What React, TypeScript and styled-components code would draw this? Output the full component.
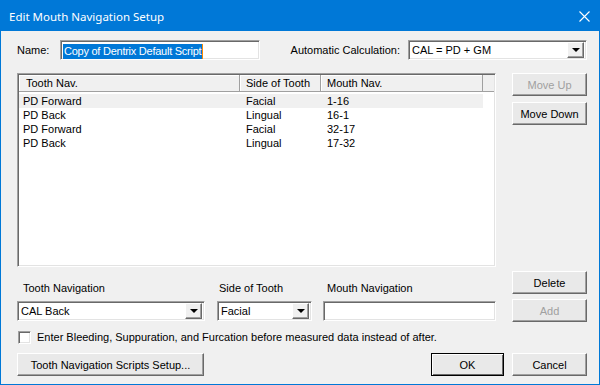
import styled, { createGlobalStyle } from 'styled-components';

const GlobalStyle = createGlobalStyle`
  html, body {
    margin: 0;
    padding: 0;
    background: #f0f0f0;
  }
  * {
    box-sizing: border-box;
  }
`;

const Window = styled.div`
  width: 600px;
  height: 385px;
  border: 1px solid #0078d7;
  background: #f0f0f0;
  display: flex;
  flex-direction: column;
  font-family: 'Liberation Sans', Arial, sans-serif;
  font-size: 11px;
  color: #000;
`;

const TitleBar = styled.div`
  height: 30px;
  background: #0078d7;
  color: #fff;
  display: flex;
  align-items: center;
  justify-content: space-between;
  padding: 0 9px 0 8px;
  font-family: 'Noto Sans', 'Open Sans', sans-serif;
  font-size: 11.5px;
`;

const Body = styled.div`
  flex: 1;
  padding: 9px 12px 0 16px;
  display: flex;
  flex-direction: column;
`;

const Row = styled.div<{ $top?: number }>`
  display: flex;
  margin-top: ${(p) => p.$top ?? 0}px;
`;

const NameLabel = styled.span`
  width: 43px;
  line-height: 20px;
`;

const Spacer = styled.div`
  flex: 1;
`;

const InlineLabel = styled.span`
  line-height: 20px;
  margin-right: 8px;
`;

const sunken = `
  border: 1px solid;
  border-color: #a0a0a0 #fff #fff #a0a0a0;
  box-shadow: inset 1px 1px #696969, inset -1px -1px #e3e3e3;
  background: #fff;
`;

const TextBox = styled.div<{ $width: number }>`
  ${sunken}
  width: ${(p) => p.$width}px;
  height: 20px;
  padding: 2px 2px 0 2px;
  display: flex;
  align-items: center;
  white-space: nowrap;
  overflow: hidden;
`;

const Selected = styled.span`
  background: #0078d7;
  color: #fff;
  line-height: 15px;
  padding: 0 1px;
  letter-spacing: -0.25px;
  border-right: 1px solid #ff8a00;
`;

const ComboBox = styled.div<{ $width: number }>`
  ${sunken}
  width: ${(p) => p.$width}px;
  height: 20px;
  display: flex;
  align-items: center;
  padding: 2px 2px 2px 3px;
`;

const ComboText = styled.span`
  flex: 1;
  white-space: nowrap;
`;

const ArrowButton = styled.div`
  width: 17px;
  height: 16px;
  background: #f0f0f0;
  border: 1px solid;
  border-color: #fff #696969 #696969 #fff;
  box-shadow: inset -1px -1px #a0a0a0;
  display: flex;
  align-items: center;
  justify-content: center;
`;

const Triangle = styled.div`
  width: 0;
  height: 0;
  border-left: 4px solid transparent;
  border-right: 4px solid transparent;
  border-top: 4px solid #000;
`;

const ListBox = styled.div`
  ${sunken}
  width: 479px;
  height: 194px;
  padding: 1px;
`;

const HeaderRow = styled.div`
  display: grid;
  grid-template-columns: 221px 81px 162px 1fr;
  height: 17px;
`;

const HeaderCell = styled.div<{ $pad?: number }>`
  background: #f0f0f0;
  border-right: 1px solid #a0a0a0;
  border-bottom: 1px solid #a0a0a0;
  box-shadow: inset 1px 1px #fff;
  padding-left: ${(p) => p.$pad ?? 6}px;
  line-height: 16px;
  white-space: nowrap;
  overflow: hidden;
`;

const HeaderFiller = styled.div`
  background: #f0f0f0;
  border-bottom: 1px solid #a0a0a0;
`;

const Rows = styled.div`
  padding-top: 2px;
`;

const DataRow = styled.div<{ $active?: boolean }>`
  display: grid;
  grid-template-columns: 221px 81px 162px;
  width: 464px;
  height: 14px;
  line-height: 14px;
  background: ${(p) => (p.$active ? '#f0f0f0' : 'transparent')};
`;

const Cell = styled.div<{ $pad?: number }>`
  padding-left: ${(p) => p.$pad ?? 6}px;
  white-space: nowrap;
`;

const SideColumn = styled.div<{ $gap: number }>`
  display: flex;
  flex-direction: column;
  gap: ${(p) => p.$gap}px;
  margin-left: 16px;
`;

const Button = styled.button<{ $width?: number; $default?: boolean }>`
  width: ${(p) => p.$width ?? 75}px;
  height: 23px;
  padding: 0;
  font: inherit;
  color: ${(p) => (p.disabled ? '#a0a0a0' : '#000')};
  background: #e9e9e9;
  border: 1px solid;
  border-color: ${(p) => (p.$default ? '#000' : '#fff #696969 #696969 #fff')};
  box-shadow: ${(p) =>
    p.$default
      ? 'inset 1px 1px #fff, inset -1px -1px #696969'
      : 'inset -1px -1px #a0a0a0'};
`;

const Fields = styled.div`
  width: 479px;
  display: flex;
  padding-top: 10px;
`;

const Field = styled.div<{ $gap?: number }>`
  display: flex;
  flex-direction: column;
  margin-left: ${(p) => p.$gap ?? 0}px;
`;

const FieldLabel = styled.div<{ $indent: number }>`
  line-height: 14px;
  height: 14px;
  margin-bottom: 6px;
  padding-left: ${(p) => p.$indent}px;
`;

const CheckRow = styled.label`
  display: flex;
  align-items: center;
  margin-top: 8px;
  height: 14px;
  gap: 6px;
  padding-left: 1px;
`;

const CheckBox = styled.span`
  ${sunken}
  width: 13px;
  height: 13px;
`;

const Footer = styled.div`
  display: flex;
  margin-top: 9px;
`;

const FooterRight = styled.div`
  margin-left: auto;
  display: flex;
  gap: 8px;
`;

function CloseIcon() {
  return (
    <svg width="11" height="11" viewBox="0 0 11 11">
      <path d="M0.5 0.5 L10.5 10.5 M10.5 0.5 L0.5 10.5" stroke="#fff" strokeWidth="1.1" />
    </svg>
  );
}

function Combo({ value, width }: { value: string; width: number }) {
  return (
    <ComboBox $width={width}>
      <ComboText>{value}</ComboText>
      <ArrowButton>
        <Triangle />
      </ArrowButton>
    </ComboBox>
  );
}

const steps = [
  { nav: 'PD Forward', side: 'Facial', mouth: '1-16' },
  { nav: 'PD Back', side: 'Lingual', mouth: '16-1' },
  { nav: 'PD Forward', side: 'Facial', mouth: '32-17' },
  { nav: 'PD Back', side: 'Lingual', mouth: '17-32' },
];

export default function App() {
  return (
    <>
      <GlobalStyle />
      <Window>
        <TitleBar>
          <span>Edit Mouth Navigation Setup</span>
          <CloseIcon />
        </TitleBar>
        <Body>
          <Row>
            <NameLabel>Name:</NameLabel>
            <TextBox $width={200}>
              <Selected>Copy of Dentrix Default Script</Selected>
            </TextBox>
            <Spacer />
            <InlineLabel>Automatic Calculation:</InlineLabel>
            <Combo value="CAL = PD + GM" width={179} />
          </Row>

          <Row $top={13}>
            <ListBox>
              <HeaderRow>
                <HeaderCell $pad={7}>Tooth Nav.</HeaderCell>
                <HeaderCell>Side of Tooth</HeaderCell>
                <HeaderCell>Mouth Nav.</HeaderCell>
                <HeaderFiller />
              </HeaderRow>
              <Rows>
                {steps.map((s, i) => (
                  <DataRow key={i} $active={i === 0}>
                    <Cell $pad={4}>{s.nav}</Cell>
                    <Cell>{s.side}</Cell>
                    <Cell>{s.mouth}</Cell>
                  </DataRow>
                ))}
              </Rows>
            </ListBox>
            <SideColumn $gap={6}>
              <Button disabled>Move Up</Button>
              <Button>Move Down</Button>
            </SideColumn>
          </Row>

          <Row $top={4}>
            <Fields>
              <Field>
                <FieldLabel $indent={6}>Tooth Navigation</FieldLabel>
                <Combo value="CAL Back" width={188} />
              </Field>
              <Field $gap={12}>
                <FieldLabel $indent={2}>Side of Tooth</FieldLabel>
                <Combo value="Facial" width={95} />
              </Field>
              <Field $gap={11}>
                <FieldLabel $indent={4}>Mouth Navigation</FieldLabel>
                <TextBox $width={173} />
              </Field>
            </Fields>
            <SideColumn $gap={5}>
              <Button>Delete</Button>
              <Button disabled>Add</Button>
            </SideColumn>
          </Row>

          <CheckRow>
            <CheckBox />
            <span>Enter Bleeding, Suppuration, and Furcation before measured data instead of after.</span>
          </CheckRow>

          <Footer>
            <Button $width={187}>Tooth Navigation Scripts Setup...</Button>
            <FooterRight>
              <Button $width={73} $default>
                OK
              </Button>
              <Button>Cancel</Button>
            </FooterRight>
          </Footer>
        </Body>
      </Window>
    </>
  );
}
